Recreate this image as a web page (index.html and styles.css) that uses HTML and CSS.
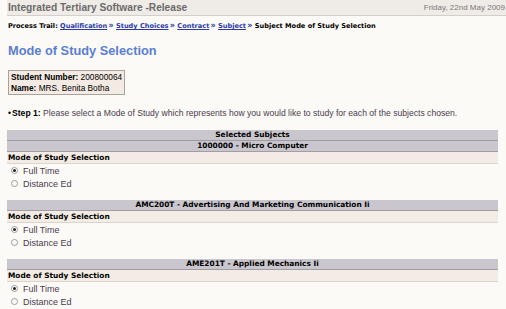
FILE: index.html
```html
<!DOCTYPE html>
<html lang="en">
<head>
    <meta charset="UTF-8">
    <title>Mode of Study Selection</title>
    <link rel="stylesheet" href="styles.css">
</head>
<body>
    <div class="topbar">
        <span class="app-name">Integrated Tertiary Software -Release</span>
        <span class="date">Friday, 22nd May 2009</span>
    </div>

    <div class="page">
        <div class="trail">
            Process Trail:
            <a href="#">Qualification</a> <span class="sep">&raquo;</span>
            <a href="#">Study Choices</a> <span class="sep">&raquo;</span>
            <a href="#">Contract</a> <span class="sep">&raquo;</span>
            <a href="#">Subject</a> <span class="sep">&raquo;</span>
            Subject Mode of Study Selection
        </div>

        <h1>Mode of Study Selection</h1>

        <div class="student">
            <div><b>Student Number:</b> 200800064</div>
            <div><b>Name:</b> MRS. Benita Botha</div>
        </div>

        <p class="step"><span class="bullet">&bull;</span><b>Step 1:</b> Please select a Mode of Study which represents how you would like to study for each of the subjects chosen.</p>

        <div class="subjects">
            <div class="head">Selected Subjects</div>

            <div class="subject">
                <div class="head">1000000 - Micro Computer</div>
                <div class="mode-title">Mode of Study Selection</div>
                <label class="option"><input type="radio" name="s1" checked> Full Time</label>
                <label class="option"><input type="radio" name="s1"> Distance Ed</label>
            </div>

            <div class="subject">
                <div class="head">AMC200T - Advertising And Marketing Communication Ii</div>
                <div class="mode-title">Mode of Study Selection</div>
                <label class="option"><input type="radio" name="s2" checked> Full Time</label>
                <label class="option"><input type="radio" name="s2"> Distance Ed</label>
            </div>

            <div class="subject">
                <div class="head">AME201T - Applied Mechanics Ii</div>
                <div class="mode-title">Mode of Study Selection</div>
                <label class="option"><input type="radio" name="s3" checked> Full Time</label>
                <label class="option"><input type="radio" name="s3"> Distance Ed</label>
            </div>
        </div>
    </div>
</body>
</html>
```

FILE: styles.css
```css
body {
    margin: 0;
    background-color: #fcfaf6;
    font-family: 'Liberation Sans', Arial, sans-serif;
    font-size: 9px;
    color: #000;
    overflow: hidden;
}

.topbar {
    display: flex;
    justify-content: space-between;
    align-items: center;
    height: 15px;
    margin-left: 7px;
    padding: 0 1px;
    background-color: #efebe7;
    border-bottom: 1px solid #d4cfca;
    white-space: nowrap;
}

.app-name {
    font-size: 10.2px;
    font-weight: bold;
    color: #6c6a6a;
}

.date {
    font-size: 8px;
    color: #7a7878;
}

.page {
    padding: 0 8px;
}

.trail {
    margin-top: 5px;
    font-family: 'DejaVu Sans', Verdana, sans-serif;
    font-size: 6.6px;
    font-weight: bold;
    white-space: nowrap;
}

.trail a {
    color: #2b3aa8;
}

.trail .sep {
    color: #2b3aa8;
    font-size: 8px;
    margin-left: -1px;
}

h1 {
    margin: 13px 0 0;
    font-size: 12.8px;
    color: #5a7fd3;
}

.student {
    display: inline-block;
    margin-top: 12px;
    padding: 1px 2px;
    background-color: #f3ebe3;
    border: 1px solid #a9a29c;
    font-size: 8.3px;
    line-height: 10.5px;
}

.step {
    margin: 13px 0 0;
    color: #4a3b4e;
    font-size: 8.6px;
}

.step b {
    color: #000;
}

.bullet {
    color: #000;
    margin-right: 1px;
}

.subjects {
    margin: 12px 0 0 -1px;
    width: 491px;
}

.head {
    height: 10px;
    line-height: 10px;
    background-color: #cac6cd;
    border-bottom: 1px solid #a19ca6;
    text-align: center;
    font-family: 'DejaVu Sans', Verdana, sans-serif;
    font-size: 7.4px;
    font-weight: bold;
}

.subject {
    margin-bottom: 10px;
}

.mode-title {
    height: 11px;
    line-height: 11px;
    background-color: #f3ece4;
    border-bottom: 1px solid #ddd5cd;
    font-family: 'DejaVu Sans', Verdana, sans-serif;
    font-size: 7.4px;
    font-weight: bold;
    padding-left: 1px;
}

.option {
    display: flex;
    align-items: center;
    height: 13px;
    padding-left: 4px;
    color: #4a3b4e;
}

.option input {
    appearance: none;
    width: 7px;
    height: 7px;
    margin: 0 5px 0 0;
    border: 1px solid #9a9a9a;
    border-radius: 50%;
    background-color: #fff;
    display: flex;
    align-items: center;
    justify-content: center;
}

.option input:checked::after {
    content: "";
    width: 3px;
    height: 3px;
    border-radius: 50%;
    background-color: #222;
}
```
